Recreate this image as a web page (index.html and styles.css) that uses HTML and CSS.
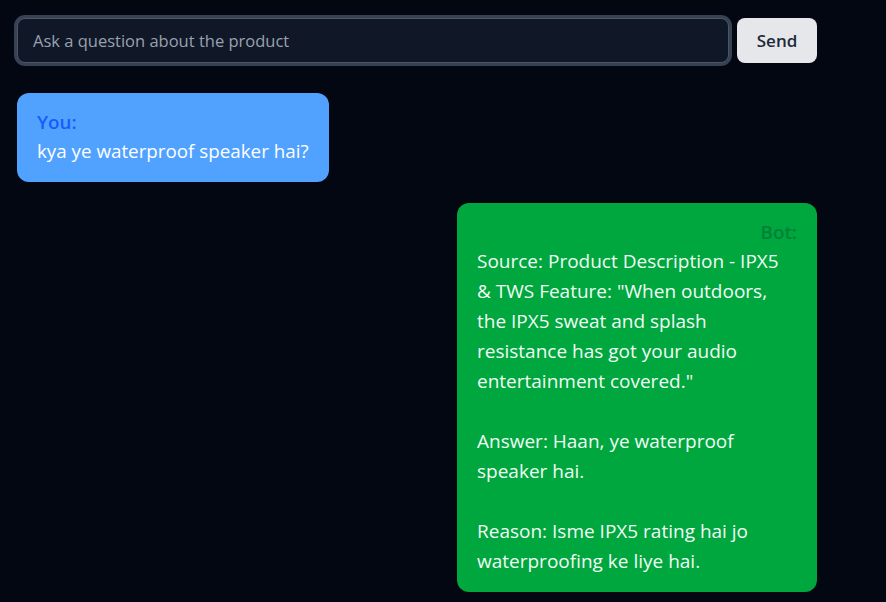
FILE: index.html
```html
<!DOCTYPE html>
<html lang="en">
<head>
<meta charset="utf-8">
<title>Product Q&amp;A</title>
<link rel="stylesheet" href="styles.css">
</head>
<body>
<main class="chat">
  <form class="ask">
    <input class="ask-input" type="text" placeholder="Ask a question about the product" autofocus>
    <button class="ask-send" type="button">Send</button>
  </form>
  <section class="messages">
    <div class="msg msg-user">
      <div class="msg-label">You:</div>
      <div class="msg-text">kya ye waterproof speaker hai?</div>
    </div>
    <div class="msg msg-bot">
      <div class="msg-label">Bot:</div>
      <div class="msg-text">Source: Product Description - IPX5 &amp; TWS Feature: "When outdoors, the IPX5 sweat and splash resistance has got your audio entertainment covered."

Answer: Haan, ye waterproof speaker hai.

Reason: Isme IPX5 rating hai jo waterproofing ke liye hai.</div>
    </div>
  </section>
</main>
</body>
</html>
```
FILE: styles.css
```css
html, body {
  margin: 0;
  padding: 0;
  background: #030712;
}
body {
  font-family: "Open Sans", "Noto Sans", sans-serif;
  font-size: 18.8px;
  color: #ffffff;
}
.chat {
  width: 800px;
  padding: 18px 0 0 17px;
}
.ask {
  display: flex;
  gap: 8px;
  margin: 0;
}
.ask-input {
  flex: 1;
  height: 45px;
  box-sizing: border-box;
  background: #101828;
  border: 1px solid #4a5565;
  border-radius: 8px;
  box-shadow: 0 0 0 3px #364153;
  outline: none;
  padding: 0 15px;
  font: inherit;
  font-size: 16.5px;
  color: #e5e7eb;
  caret-color: #e5e7eb;
}
.ask-input::placeholder {
  color: #99a1af;
}
.ask-send {
  width: 80px;
  height: 45px;
  border: none;
  border-radius: 8px;
  background: #e5e7eb;
  color: #1e2939;
  font: inherit;
  font-size: 17px;
  font-weight: 600;
  cursor: pointer;
}
.messages {
  display: flex;
  flex-direction: column;
  gap: 21px;
  margin-top: 30px;
}
.msg {
  border-radius: 12px;
  padding: 16px 20px;
  box-sizing: border-box;
}
.msg-label {
  font-weight: 600;
  line-height: 27px;
}
.msg-text {
  line-height: 30px;
  white-space: pre-line;
}
.msg-user {
  align-self: flex-start;
  background: #51a2ff;
}
.msg-user .msg-label {
  color: #155dfc;
}
.msg-bot {
  align-self: flex-end;
  width: 360px;
  background: #00a63e;
}
.msg-bot .msg-label {
  color: #008236;
  text-align: right;
}
.msg-bot .msg-text {
  color: #f0fdf4;
  font-size: 19px;
  margin-right: 4px;
}
```
